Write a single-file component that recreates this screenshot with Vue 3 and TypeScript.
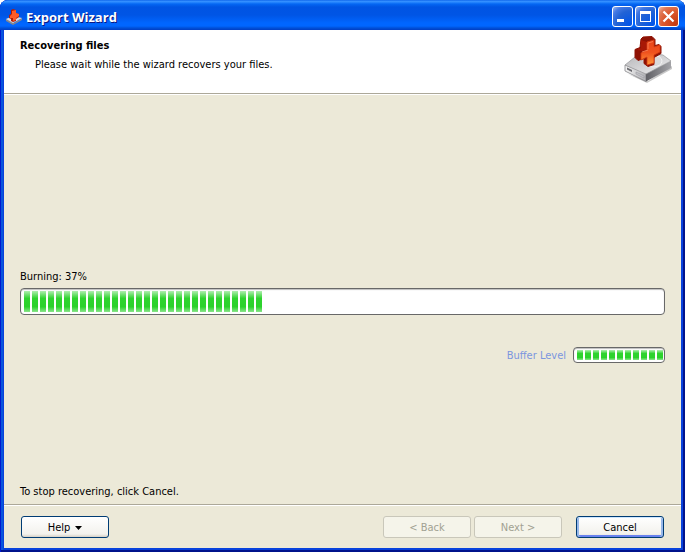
<script setup lang="ts">
import { computed, ref } from 'vue'

const progress = ref(37)
const blocks = computed(() => Math.round(progress.value * 0.81))
const bufferBlocks = 11
const status = computed(() => `Burning: ${progress.value}%`)
</script>

<template>
  <main class="window">
    <header class="titlebar">
      <svg class="app-icon" viewBox="0 0 16 16" aria-hidden="true">
        <path d="M0 10v2l7 4 9-5V9l-8 5z" fill="#85858b" />
        <path d="M0 10l7-3 9 2-9 5z" fill="#dcdcdf" />
        <path d="M5 1l2-1 3 1v3l3 1v3l-3 2v2l-3 1-2-1v-2l-2-1V6l2-1z" fill="#b51e05" />
        <path d="M6 2l4-1v3l3 1v2l-3 2v2l-3 1V9L4 9V7l2-2z" fill="#ff5c28" />
      </svg>
      <h1 class="title">Export Wizard</h1>
      <div class="controls">
        <button type="button" class="control" aria-label="Minimize">
          <svg viewBox="0 0 21 21"><path d="M5 13h7v3H5z" fill="#fff" /></svg>
        </button>
        <button type="button" class="control" aria-label="Maximize">
          <svg viewBox="0 0 21 21"><path d="M5 5h11v11H5zM6 8v7h9V8z" fill="#fff" fill-rule="evenodd" /></svg>
        </button>
        <button type="button" class="control close" aria-label="Close">
          <svg viewBox="0 0 21 21"><path d="M5.500 5.500l10 10M15.500 5.500l-10 10" stroke="#fff" stroke-width="2.200" /></svg>
        </button>
      </div>
    </header>

    <section class="banner">
      <div>
        <h2 class="heading">Recovering files</h2>
        <p class="subheading">Please wait while the wizard recovers your files.</p>
      </div>
      <svg class="drive" viewBox="0 0 48 48" aria-hidden="true">
        <defs>
          <linearGradient id="top" x1="0" y1="0" x2="1" y2="1">
            <stop offset="0" stop-color="#b4b4b7" /><stop offset="1" stop-color="#f0f0f1" />
          </linearGradient>
          <linearGradient id="front" x1="0" y1="0" x2="1" y2="0">
            <stop offset="0" stop-color="#f5f5f5" /><stop offset="1" stop-color="#b0b0b4" />
          </linearGradient>
          <linearGradient id="side" x1="0" y1="0" x2="1" y2="0">
            <stop offset="0" stop-color="#606065" /><stop offset="1" stop-color="#a4a4a8" />
          </linearGradient>
          <linearGradient id="cross" x1="0" y1="0" x2="0" y2="1">
            <stop offset="0" stop-color="#e8451a" /><stop offset=".5" stop-color="#f0531f" /><stop offset="1" stop-color="#ff983a" />
          </linearGradient>
        </defs>
        <path d="M4 38 23 47 48 33v-3L24 45z" fill="#c9c9c9" />
        <path d="M1 29v6l21 10.500V37z" fill="url(#front)" stroke="#77777b" stroke-width=".7" />
        <path d="M22 37v8.500L47 32v-7z" fill="url(#side)" />
        <path d="M1 29 11 21l15-4 13 2 8 6-25 13z" fill="url(#top)" stroke="#96969a" stroke-width=".7" />
        <ellipse cx="29" cy="25" rx="9" ry="6" fill="#d9d9db" stroke="#f7f7f7" stroke-width=".8" />
        <path d="M3 31.500l5 2.500v2l-5-2.500z" fill="#6a6a6f" />
        <path d="M12 36l8 4v2l-8-4z" fill="#c6c6ca" stroke="#939398" stroke-width=".5" />
        <path d="M17 3l2-2 9-.5 3 3v6l4-1 2 2v7l-7 4v7l-6 2-4-3v-5l-6 2-3-3v-8l5-2z" fill="#8e1204" stroke="#8e1204" stroke-linejoin="round" />
        <path d="M17 4l6 2v7l-4 2-6-1 4-2z" fill="#a81806" />
        <path d="M23 6l7-2v7l6-2v7l-6 3v8l-7 2v-8l-6 3v-7l6-3z" fill="url(#cross)" stroke="#d53a10" stroke-width=".8" stroke-linejoin="round" />
        <path d="M24 13V7l5-1.500M18 16l6-2" fill="none" stroke="#ff9068" stroke-width=".7" />
      </svg>
    </section>

    <section class="content">
      <p id="status" class="status">{{ status }}</p>
      <div class="progress" role="progressbar" aria-labelledby="status" :aria-valuenow="progress" aria-valuemin="0" aria-valuemax="100">
        <span v-for="n in blocks" :key="n" class="block"></span>
      </div>
      <div class="buffer">
        <span id="buffer-label">Buffer Level</span>
        <div class="progress small" role="progressbar" aria-labelledby="buffer-label" aria-valuenow="100" aria-valuemin="0" aria-valuemax="100">
          <span v-for="n in bufferBlocks" :key="n" class="block"></span>
        </div>
      </div>
      <p class="hint">To stop recovering, click Cancel.</p>
    </section>

    <footer class="footer">
      <button type="button" class="button help">
        <span>Help</span>
        <svg class="arrow" viewBox="0 0 7 4" aria-hidden="true"><path d="M0 0h7L3.500 4z" /></svg>
      </button>
      <div class="nav">
        <button type="button" class="button" disabled>&lt; Back</button>
        <button type="button" class="button" disabled>Next &gt;</button>
      </div>
      <button type="button" class="button default">Cancel</button>
    </footer>
  </main>
</template>

<style>
body {
  margin: 0;
  background: #fff;
}
</style>

<style scoped>
.window {
  box-sizing: border-box;
  min-height: 100vh;
  display: flex;
  flex-direction: column;
  padding: 0 4px 4px;
  background: #0842dc;
  border-radius: 8px 8px 0 0;
  box-shadow: inset 1px 0 #0019cf, inset -2px -2px #00138c, inset 3px 0 #0855dd;
  overflow: hidden;
  color: #000;
  font: 11px/14px "DejaVu Sans Condensed", "DejaVu Sans", sans-serif;
}
h1, h2, p {
  margin: 0;
}
.titlebar {
  height: 30px;
  margin: 0 -4px;
  padding: 3px 6px 0;
  box-sizing: border-box;
  display: flex;
  align-items: center;
  background: linear-gradient(#0058e6 0, #3a93ff 1px, #2b8aff 2px, #0467f3 4px, #0054e3 7px, #0055e5 15px, #0066ff 23px, #0066ff 26px, #0050d8 28px, #003dc4 30px);
}
.app-icon {
  width: 16px;
  height: 16px;
}
.title {
  flex: 1;
  margin-left: 4px;
  color: #fff;
  font: bold 13px/18px "Open Sans", "Noto Sans", sans-serif;
  text-shadow: 1px 1px #0a1883;
}
.controls {
  display: flex;
  gap: 2px;
}
.control {
  width: 21px;
  height: 21px;
  padding: 0;
  border: 1px solid #fff;
  border-radius: 3px;
  background: radial-gradient(circle at 90% 90%, #0054e9 0, #2263d5 55%, #4479e4 79%, #a3bbec 100%);
}
.control svg {
  display: block;
  width: 21px;
  height: 21px;
  margin: -1px;
}
.close {
  background: radial-gradient(circle at 90% 90%, #c63a10 0, #dc5a30 55%, #e07a58 79%, #f6bda8 100%);
}
.banner {
  min-height: 63px;
  box-sizing: border-box;
  display: flex;
  justify-content: space-between;
  padding: 9px 9px 0 16px;
  background: #fff;
}
.heading {
  font-size: 11px;
  line-height: 14px;
}
.subheading {
  margin: 5px 0 0 15px;
}
.drive {
  width: 48px;
  height: 48px;
  margin-top: -3px;
}
.content {
  flex: 1;
  display: flex;
  flex-direction: column;
  padding: 176px 16px 5px;
  background: #ece9d8;
  border-top: 1px solid #aca899;
  box-shadow: inset 0 1px #fff;
}
.progress {
  box-sizing: border-box;
  height: 27px;
  margin-top: 4px;
  padding: 2px 3px;
  display: flex;
  gap: 2px;
  border: 1px solid #686868;
  border-radius: 4px;
  background: #fff;
  box-shadow: inset 0 1px 1px #bebebe;
}
.block {
  width: 6px;
  background: linear-gradient(#b0eeb0, #2fd32f 35%, #2bd22b 75%, #8be58b);
}
.buffer {
  display: flex;
  justify-content: flex-end;
  align-items: flex-end;
  gap: 7px;
  margin-top: 32px;
  color: #7b96df;
}
.small {
  height: 16px;
  width: 92px;
  margin: 0;
  padding: 2px 0 2px 3px;
}
.small .block {
  flex: none;
}
.hint {
  margin-top: auto;
}
.footer {
  display: flex;
  align-items: center;
  padding: 11px 17px 10px;
  background: #ece9d8;
  border-top: 1px solid #aca899;
  box-shadow: inset 0 1px #fff;
}
.button {
  width: 88px;
  height: 22px;
  padding: 1px 0 0;
  border: 1px solid #003c74;
  border-radius: 3px;
  background: linear-gradient(#fff, #f3f2ed 85%, #d6d0c5);
  color: #000;
  font: inherit;
}
.button:disabled {
  border-color: #c9c7ba;
  background: #f5f4ea;
  color: #a1a192;
}
.help {
  display: flex;
  align-items: center;
  justify-content: center;
  gap: 5px;
  margin-right: auto;
}
.arrow {
  width: 7px;
  height: 4px;
}
.nav {
  display: flex;
  gap: 3px;
  margin-right: 14px;
}
.default {
  box-shadow: inset 0 1px #cee7ff, inset 2px 0 #98b8ea, inset -2px 0 #98b8ea, inset 0 -2px #6982ee;
}
</style>
